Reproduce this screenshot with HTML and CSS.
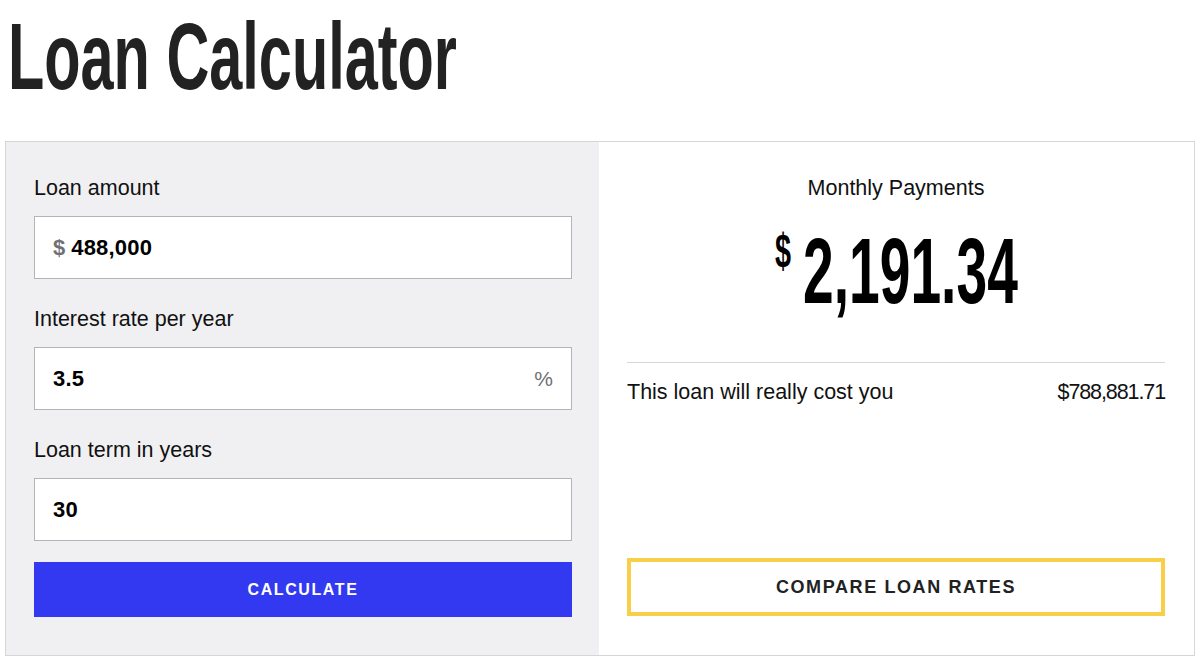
FILE: index.html
```html
<!DOCTYPE html>
<html>
<head>
<meta charset="utf-8">
<title>Loan Calculator</title>
<link rel="stylesheet" href="styles.css">
</head>
<body>
<h1 class="title"><span class="title-text">Loan Calculator</span></h1>
<div class="card">
  <div class="form-panel">
    <label class="field-label">Loan amount</label>
    <div class="field">
      <span class="prefix">$</span>
      <span class="value">488,000</span>
    </div>
    <label class="field-label">Interest rate per year</label>
    <div class="field">
      <span class="value">3.5</span>
      <span class="suffix">%</span>
    </div>
    <label class="field-label">Loan term in years</label>
    <div class="field">
      <span class="value">30</span>
    </div>
    <button class="btn-calc">CALCULATE</button>
  </div>
  <div class="result-panel">
    <div class="result-label">Monthly Payments</div>
    <div class="result-amount"><span class="amount-inner"><span class="amount-cur">$</span><span class="amount-num">2,191.34</span></span></div>
    <div class="divider"></div>
    <div class="cost-row">
      <span>This loan will really cost you</span>
      <span class="cost-value">$788,881.71</span>
    </div>
    <button class="btn-compare">COMPARE LOAN RATES</button>
  </div>
</div>
</body>
</html>
```

FILE: styles.css
```css
* { box-sizing: border-box; }
body {
  margin: 0;
  background: #fff;
  font-family: "Liberation Sans", Arial, sans-serif;
  color: #111;
}
.title {
  margin: 10px 0 37px 8px;
  height: 94px;
  font-size: 94px;
  line-height: 94px;
  font-weight: 700;
  color: #222;
  white-space: nowrap;
}
.title-text {
  display: inline-block;
  transform: scaleX(0.632);
  transform-origin: left center;
  letter-spacing: 0;
}
.card {
  margin: 0 5px;
  border: 1px solid #d6d6d8;
  display: grid;
  grid-template-columns: 593px 1fr;
  height: 515px;
}
.form-panel {
  background: #f0f0f2;
  padding: 34px 27px 0 28px;
  display: flex;
  flex-direction: column;
}
.field-label {
  font-size: 21.5px;
  line-height: 24px;
  color: #111;
  margin-bottom: 16px;
}
.field {
  height: 63px;
  background: #fff;
  border: 1px solid #b4b4b8;
  display: flex;
  align-items: center;
  padding: 0 18px 0 18px;
  font-size: 22px;
  margin-bottom: 28px;
}
.prefix {
  color: #6f6f75;
  font-weight: 700;
  margin-right: 6px;
}
.value {
  font-weight: 700;
  color: #000;
  flex: 1;
  font-size: 22px;
  letter-spacing: 0.2px;
}
.suffix {
  color: #6f6f75;
  font-size: 21px;
}
.field:nth-of-type(3) { margin-bottom: 21px; }
.btn-calc {
  height: 55px;
  background: #3339f1;
  border: 0;
  color: #fff;
  font-family: "Liberation Sans", Arial, sans-serif;
  font-weight: 700;
  font-size: 16px;
  letter-spacing: 1.6px;
  padding: 0;
}
.result-panel {
  padding: 34px 29px 39px 28px;
  display: flex;
  flex-direction: column;
}
.result-label {
  text-align: center;
  font-size: 21.5px;
  line-height: 24px;
  color: #111;
}
.result-amount {
  text-align: center;
  margin-top: 25px;
  height: 121px;
  line-height: 92px;
  white-space: nowrap;
}
.amount-inner {
  display: inline-block;
  transform: scaleX(0.6);
  transform-origin: center;
  font-weight: 700;
  color: #000;
}
.amount-cur {
  font-size: 48px;
  vertical-align: top;
  line-height: 48px;
  margin-right: 20px;
  position: relative;
  top: 2px;
}
.amount-num {
  font-size: 92px;
}
.divider {
  height: 1px;
  background: #d6d6d8;
  margin-top: 16px;
}
.cost-row {
  display: flex;
  justify-content: space-between;
  font-size: 21.5px;
  line-height: 24px;
  margin-top: 17px;
  color: #111;
}
.cost-value {
  letter-spacing: -1.1px;
}
.btn-compare {
  margin-top: auto;
  height: 58px;
  background: #fff;
  border: 4px solid #f9cf4a;
  color: #222;
  font-family: "Liberation Sans", Arial, sans-serif;
  font-weight: 700;
  font-size: 18px;
  letter-spacing: 1.6px;
  padding: 0;
}
```
